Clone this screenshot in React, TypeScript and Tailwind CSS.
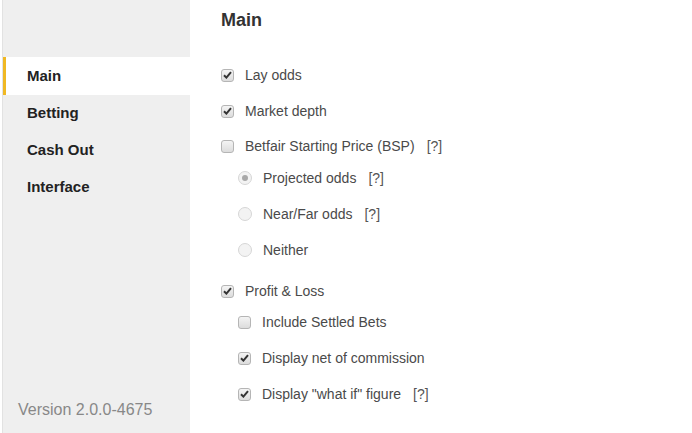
import { ReactNode } from "react";

function Check({ checked }: { checked: boolean }) {
  return (
    <span className="w-[13px] h-[13px] rounded-[3px] border border-[#b5b5b5] bg-gradient-to-b from-[#f4f4f4] to-[#dcdcdc] flex items-center justify-center shrink-0">
      {checked && (
        <svg width="9" height="8" viewBox="0 0 9 8">
          <path d="M1 4.2 L3.4 6.6 L8 1.2" fill="none" stroke="#333" strokeWidth="2" />
        </svg>
      )}
    </span>
  );
}

function Radio({ selected }: { selected: boolean }) {
  return (
    <span className="w-[14px] h-[14px] rounded-full border border-[#d6d6d6] bg-[#f3f3f3] flex items-center justify-center shrink-0">
      {selected && <span className="w-[6px] h-[6px] rounded-full bg-[#a8a8a8]" />}
    </span>
  );
}

function Help() {
  return <span className="ml-[12px] text-[#555]">[?]</span>;
}

function Row({ indent, control, children, mt }: { indent?: boolean; control: ReactNode; children: ReactNode; mt: string }) {
  return (
    <div className={`flex items-center h-[30px] ${mt} ${indent ? "pl-[17px]" : ""}`}>
      {control}
      <span className="ml-[11px] flex items-center">{children}</span>
    </div>
  );
}

export default function App() {
  const nav = ["Main", "Betting", "Cash Out", "Interface"];
  return (
    <div className="w-[692px] h-[433px] flex bg-white overflow-hidden text-[#333]" style={{ fontFamily: '"Liberation Sans", Arial, sans-serif' }}>
      <div className="w-[3px] bg-white border-r border-[#e2e2e2]" />
      <div className="w-[187px] bg-[#efefef] flex flex-col pt-[57px] pb-[11px]">
        {nav.map((n, i) => (
          <div
            key={n}
            className={
              i === 0
                ? "h-[38px] flex items-center bg-white border-l-[3px] border-[#f0b823] pl-[21px] text-[15px] font-bold text-[#222]"
                : "h-[37px] flex items-center pl-[24px] text-[15px] font-bold text-[#222]"
            }
          >
            {n}
          </div>
        ))}
        <div className="mt-auto pl-[15px] text-[16px] text-[#888]">Version 2.0.0-4675</div>
      </div>
      <div className="flex-1 pl-[31px] pt-[9px] text-[14px] text-[#4a4a4a]">
        <div className="text-[18px] font-bold text-[#333] h-[22px] leading-[22px]">Main</div>
        <div className="flex flex-col">
          <Row mt="mt-[29px]" control={<Check checked />}>Lay odds</Row>
          <Row mt="mt-[6px]" control={<Check checked />}>Market depth</Row>
          <Row mt="mt-[5px]" control={<Check checked={false} />}>Betfair Starting Price (BSP)<Help /></Row>
          <Row indent mt="mt-[2px]" control={<Radio selected />}>Projected odds<Help /></Row>
          <Row indent mt="mt-[6px]" control={<Radio selected={false} />}>Near/Far odds<Help /></Row>
          <Row indent mt="mt-[6px]" control={<Radio selected={false} />}>Neither</Row>
          <Row mt="mt-[11px]" control={<Check checked />}>Profit &amp; Loss</Row>
          <Row indent mt="mt-[1px]" control={<Check checked={false} />}>Include Settled Bets</Row>
          <Row indent mt="mt-[6px]" control={<Check checked />}>Display net of commission</Row>
          <Row indent mt="mt-[6px]" control={<Check checked />}>Display "what if" figure<Help /></Row>
        </div>
      </div>
    </div>
  );
}
